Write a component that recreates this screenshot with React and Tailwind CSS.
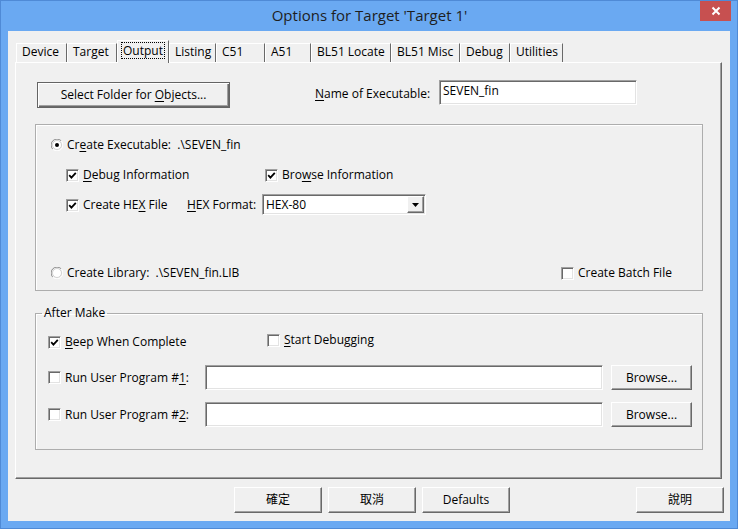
import React from "react";

const FONT = { fontFamily: '"Open Sans", "Noto Sans CJK TC", sans-serif' };

function U({ children }) {
  return <span className="underline underline-offset-[2px]">{children}</span>;
}

function Check({ checked }) {
  return (
    <span className="inline-flex h-[13px] w-[13px] shrink-0 items-center justify-center border border-t-[#a0a0a0] border-l-[#a0a0a0] border-r-white border-b-white bg-white shadow-[inset_1px_1px_0_#696969,inset_-1px_-1px_0_#e3e3e3]">
      {checked && (
        <svg width="9" height="9" viewBox="0 0 9 9">
          <path d="M1.2 4.2 L3.4 6.6 L7.8 1.8" fill="none" stroke="#000" strokeWidth="1.8" />
        </svg>
      )}
    </span>
  );
}

function Radio({ checked }) {
  return (
    <svg width="12" height="12" viewBox="0 0 12 12" className="shrink-0">
      <path d="M10.2 1.8 A5.5 5.5 0 0 0 1.8 10.2" fill="none" stroke="#8a8a8a" strokeWidth="1" />
      <path d="M1.8 10.2 A5.5 5.5 0 0 0 10.2 1.8" fill="none" stroke="#ffffff" strokeWidth="1" />
      <circle cx="6" cy="6" r="4.5" fill="#fff" stroke="#c8c8c8" strokeWidth="0.8" />
      {checked && <circle cx="6" cy="6" r="2" fill="#000" />}
    </svg>
  );
}

function Btn({ children, className = "" }) {
  return (
    <div
      className={
        "flex items-center justify-center border border-t-white border-l-white border-r-[#696969] border-b-[#696969] bg-[#f0f0f0] shadow-[inset_-1px_-1px_0_#a0a0a0] text-[12px] text-black " +
        className
      }
    >
      {children}
    </div>
  );
}

function Field({ children, className = "" }) {
  return (
    <div
      className={
        "flex items-center border border-t-[#a0a0a0] border-l-[#a0a0a0] border-r-white border-b-white bg-white shadow-[inset_1px_1px_0_#696969,inset_-1px_-1px_0_#e3e3e3] px-[3px] text-[12px] text-black " +
        className
      }
    >
      {children}
    </div>
  );
}

function Tab({ label, w, selected }) {
  if (selected) {
    return (
      <div
        className="z-10 -mb-px flex h-[23px] items-start border-l border-t border-r border-l-white border-t-white border-r-[#696969] bg-[#f0f0f0] pl-[3px] pt-[1px]"
        style={{ width: w }}
      >
        <span className="border border-dotted border-black px-[1px] leading-[15px]">{label}</span>
      </div>
    );
  }
  return (
    <div
      className="flex h-[19px] items-center border-l border-t border-r border-l-white border-t-white border-r-[#696969] bg-[#f0f0f0] pb-[3px] pl-[5px] leading-[15px]"
      style={{ width: w }}
    >
      {label}
    </div>
  );
}

export default function App() {
  const tabs = [
    ["Device", 51],
    ["Target", 50],
    ["Output", 52, true],
    ["Listing", 47],
    ["C51", 49],
    ["A51", 46],
    ["BL51 Locate", 80],
    ["BL51 Misc", 69],
    ["Debug", 50],
    ["Utilities", 53],
  ];
  return (
    <div
      className="flex h-[529px] w-[738px] flex-col border border-[#4f8ad6] bg-[#6aa9f2] text-[12px] text-black"
      style={FONT}
    >
      {/* title bar */}
      <div className="flex h-[30px] shrink-0 items-start">
        <div className="flex h-[29px] flex-1 items-center justify-center pl-[38px] text-[15px] text-[#1e1e1e]">
          Options for Target 'Target 1'
        </div>
        <div className="mr-[6px] flex h-[20px] w-[31px] items-center justify-center bg-[#c75050]">
          <svg width="10" height="10" viewBox="0 0 10 10">
            <path d="M1.5 1.5 L8.5 8.5 M8.5 1.5 L1.5 8.5" stroke="#fff" strokeWidth="2" />
          </svg>
        </div>
      </div>

      {/* client */}
      <div className="mx-[7px] flex h-[490px] w-[722px] flex-col bg-[#f0f0f0]">
        {/* tabs */}
        <div className="ml-[8px] mt-[9px] flex h-[22px] items-end">
          {tabs.map(([l, w, s]) => (
            <Tab key={l} label={l} w={w} selected={s} />
          ))}
        </div>

        {/* panel */}
        <div className="ml-[7px] flex h-[417px] w-[707px] flex-col border border-t-white border-l-white border-r-[#696969] border-b-[#696969] shadow-[inset_-1px_-1px_0_#a0a0a0]">
          {/* top row */}
          <div className="ml-[21px] mt-[17px] flex items-start">
            <div className="mt-[2px] flex h-[26px] w-[193px] items-center justify-center border border-[#646464] bg-[#f0f0f0] shadow-[inset_1px_1px_0_#fff,inset_-1px_-1px_0_#696969,inset_-2px_-2px_0_#a0a0a0]">
              <span>
                Select Folder for <U>O</U>bjects...
              </span>
            </div>
            <div className="ml-[85px] flex h-[25px] w-[124px] items-center pt-[2px]">
              <span>
                <U>N</U>ame of Executable:
              </span>
            </div>
            <Field className="h-[25px] w-[198px] items-start pt-[1px]">SEVEN_fin</Field>
          </div>

          {/* group 1 */}
          <div className="ml-[19px] mt-[16px] flex h-[167px] w-[668px] flex-col border border-[#adadad] shadow-[inset_1px_1px_0_#fff]">
            <div className="ml-[15px] mt-[10px] flex h-[20px] items-center gap-[4px]">
              <Radio checked />
              <span>
                Cr<U>e</U>ate Executable:&nbsp;&nbsp;.\SEVEN_fin
              </span>
            </div>
            <div className="ml-[30px] mt-[10px] flex h-[20px] items-center">
              <div className="flex w-[199px] items-center gap-[4px]">
                <Check checked />
                <span>
                  <U>D</U>ebug Information
                </span>
              </div>
              <div className="flex items-center gap-[4px]">
                <Check checked />
                <span>
                  Bro<U>w</U>se Information
                </span>
              </div>
            </div>
            <div className="ml-[30px] mt-[10px] flex h-[20px] items-center">
              <div className="flex w-[121px] items-center gap-[4px]">
                <Check checked />
                <span>
                  Create HE<U>X</U> File
                </span>
              </div>
              <div className="w-[75px]">
                <span>
                  <U>H</U>EX Format:
                </span>
              </div>
              <Field className="mb-[1px] h-[21px] w-[164px] justify-between pr-[1px]">
                <span>HEX-80</span>
                <Btn className="h-[17px] w-[17px]">
                  <svg width="7" height="4" viewBox="0 0 7 4">
                    <path d="M0 0 H7 L3.5 4 Z" fill="#000" />
                  </svg>
                </Btn>
              </Field>
            </div>
            <div className="ml-[15px] mt-[48px] flex h-[20px] items-center">
              <div className="flex w-[510px] items-center gap-[4px]">
                <Radio />
                <span>Create Library:&nbsp;&nbsp;.\SEVEN_fin.LIB</span>
              </div>
              <div className="flex items-center gap-[4px]">
                <Check />
                <span>Create Batch File</span>
              </div>
            </div>
          </div>

          {/* After Make */}
          <fieldset className="ml-[19px] mt-[14px] h-[145px] w-[668px] border border-[#adadad] shadow-[inset_1px_1px_0_#fff]">
            <legend className="ml-[6px] px-[2px] leading-[16px]">After Make</legend>
            <div className="ml-[12px] mt-[11px] flex h-[20px] items-center">
              <div className="flex w-[219px] items-center gap-[4px]">
                <Check checked />
                <span>
                  <U>B</U>eep When Complete
                </span>
              </div>
              <div className="mb-[4px] flex items-center gap-[4px]">
                <Check />
                <span>
                  <U>S</U>tart Debugging
                </span>
              </div>
            </div>
            {[1, 2].map((n) => (
              <div key={n} className={"ml-[12px] flex h-[25px] items-center " + (n === 1 ? "mt-[13px]" : "mt-[12px]")}>
                <div className="flex w-[157px] items-center gap-[4px]">
                  <Check />
                  <span>
                    Run User Program #<U>{n}</U>:
                  </span>
                </div>
                <Field className="h-[25px] w-[398px]" />
                <Btn className="ml-[8px] h-[25px] w-[81px]">Browse...</Btn>
              </div>
            ))}
          </fieldset>
        </div>

        {/* bottom buttons */}
        <div className="ml-[226px] mr-[6px] mt-[8px] flex gap-[6px]">
          <Btn className="h-[26px] w-[88px]">確定</Btn>
          <Btn className="h-[26px] w-[88px]">取消</Btn>
          <Btn className="h-[26px] w-[88px]">Defaults</Btn>
          <Btn className="ml-auto h-[26px] w-[88px]">說明</Btn>
        </div>
      </div>
    </div>
  );
}
